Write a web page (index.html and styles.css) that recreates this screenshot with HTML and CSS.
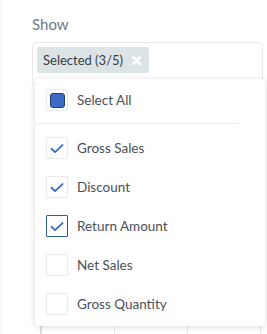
FILE: index.html
```html
<!DOCTYPE html>
<html lang="en">
<head>
    <meta charset="UTF-8">
    <meta name="viewport" content="width=device-width, initial-scale=1.0">
    <title>Show filter</title>
    <link rel="stylesheet" href="styles.css">
</head>
<body>
    <div class="page">
        <div class="field">
            <label class="field-label">Show</label>
            <div class="select-box">
                <span class="chip">Selected (3/5)
                    <svg class="chip-x" width="9" height="9" viewBox="0 0 9 9"><path d="M1.2 1.2l6.6 6.6M7.8 1.2l-6.6 6.6" stroke="#ffffff" stroke-width="2.4" stroke-linecap="round"/></svg>
                </span>
            </div>

            <div class="dropdown">
                <div class="option all">
                    <span class="box"><span class="fill"></span></span>
                    <span class="text">Select All</span>
                </div>
                <div class="divider"></div>
                <div class="option">
                    <span class="box"><svg width="16" height="16" viewBox="0 0 16 16"><path d="M2.5 8.8l3.5 3.3 7.5-7" fill="none" stroke="#3b6bc9" stroke-width="1.9" stroke-linecap="round" stroke-linejoin="round"/></svg></span>
                    <span class="text">Gross Sales</span>
                </div>
                <div class="option">
                    <span class="box"><svg width="16" height="16" viewBox="0 0 16 16"><path d="M2.5 8.8l3.5 3.3 7.5-7" fill="none" stroke="#3b6bc9" stroke-width="1.9" stroke-linecap="round" stroke-linejoin="round"/></svg></span>
                    <span class="text">Discount</span>
                </div>
                <div class="option">
                    <span class="box focus"><svg width="16" height="16" viewBox="0 0 16 16"><path d="M2.5 8.8l3.5 3.3 7.5-7" fill="none" stroke="#3b6bc9" stroke-width="1.9" stroke-linecap="round" stroke-linejoin="round"/></svg></span>
                    <span class="text">Return Amount</span>
                </div>
                <div class="option">
                    <span class="box"></span>
                    <span class="text">Net Sales</span>
                </div>
                <div class="option">
                    <span class="box"></span>
                    <span class="text">Gross Quantity</span>
                </div>
            </div>
        </div>

        <div class="table-bg">
            <div class="cell"></div>
            <div class="cell"></div>
            <div class="cell"></div>
        </div>
    </div>
</body>
</html>
```

FILE: styles.css
```css
body {
    margin: 0;
    font-family: 'Lato', 'Noto Sans', sans-serif;
    background: #ffffff;
    width: 267px;
    height: 334px;
    overflow: hidden;
}
.page {
    position: relative;
    height: 334px;
    border-left: 2px solid #f7f7f8;
    padding: 15px 4px 0 30px;
}
.field-label {
    display: block;
    font-size: 15px;
    color: #6f7a86;
    height: 19px;
    line-height: 19px;
    margin-bottom: 8px;
}
.select-box {
    height: 33px;
    border: 1px solid #e8e9eb;
    border-radius: 4px;
    padding: 4px;
    box-sizing: content-box;
    width: 221px;
}
.chip {
    display: inline-flex;
    align-items: center;
    height: 26px;
    padding: 0 8px 0 6px;
    background: #dde4e6;
    border-radius: 2px;
    font-size: 13px;
    color: #373d47;
}
.chip-x {
    margin-left: 9px;
}
.dropdown {
    position: absolute;
    top: 79px;
    left: 33px;
    width: 230px;
    height: 247px;
    background: #ffffff;
    border-radius: 4px;
    box-shadow: 0 1px 6px rgba(0,0,0,0.14);
    z-index: 2;
    padding-top: 10px;
    box-sizing: border-box;
}
.option {
    display: flex;
    align-items: center;
    height: 22px;
    padding-left: 11px;
    margin-bottom: 17px;
}
.option.all {
    margin-bottom: 12px;
}
.divider {
    height: 1px;
    background: #ebedef;
    width: 204px;
    margin-bottom: 13px;
}
.box {
    width: 20px;
    height: 20px;
    border: 1px solid #e8e9eb;
    border-radius: 1px;
    display: flex;
    align-items: center;
    justify-content: center;
    flex-shrink: 0;
}
.box.focus {
    border-color: #2f5ca8;
}
.fill {
    width: 13px;
    height: 13px;
    background: #3b6bc9;
    border: 1px solid #26406e;
    border-radius: 3px;
}
.text {
    margin-left: 9px;
    font-size: 13.5px;
    color: #4a4f58;
}
.table-bg {
    position: absolute;
    top: 326px;
    left: 38px;
    display: flex;
    height: 10px;
    border-left: 2px solid #d9dbde;
}
.cell {
    width: 72px;
    border-right: 1px solid #e3e5e8;
}
```
